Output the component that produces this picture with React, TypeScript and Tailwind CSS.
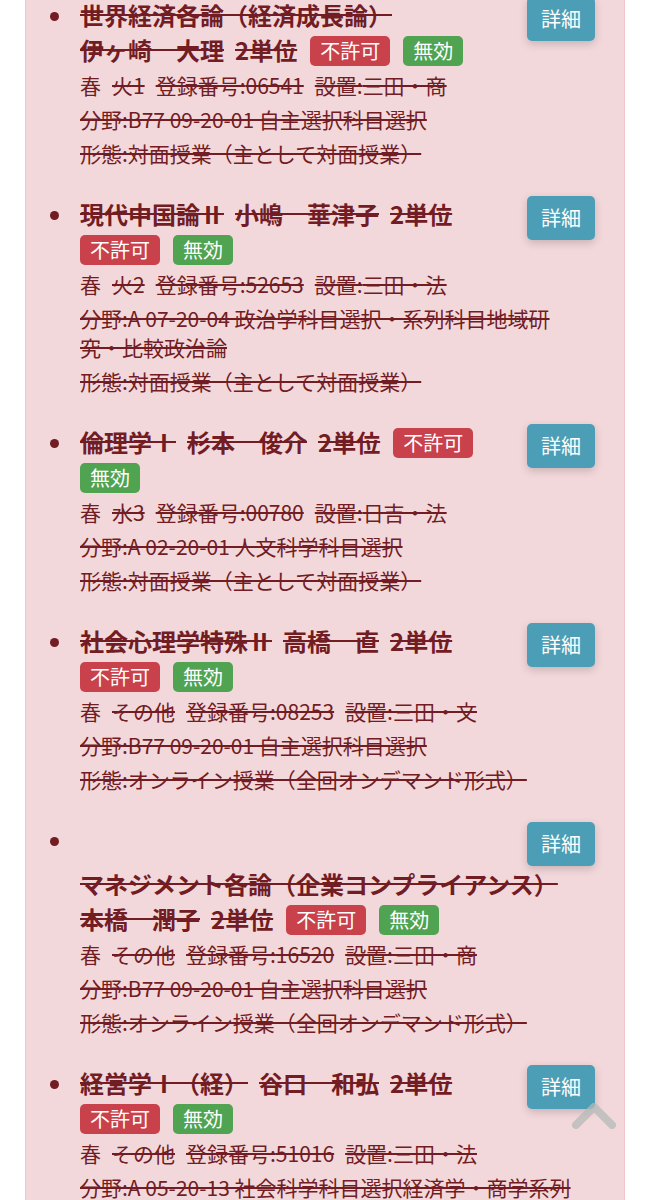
type Course = {
  name: string
  teacher: string
  time: string
  code: string
  place: string
  field: string
  form: string
}

const courses: Course[] = [
  {
    name: '世界経済各論（経済成長論）',
    teacher: '伊ヶ崎　大理',
    time: '火1',
    code: '06541',
    place: '三田・商',
    field: '分野:B77 09-20-01 自主選択科目選択',
    form: '形態:対面授業（主として対面授業）',
  },
  {
    name: '現代中国論Ⅱ',
    teacher: '小嶋　華津子',
    time: '火2',
    code: '52653',
    place: '三田・法',
    field: '分野:A 07-20-04 政治学科目選択・系列科目地域研究・比較政治論',
    form: '形態:対面授業（主として対面授業）',
  },
  {
    name: '倫理学Ⅰ',
    teacher: '杉本　俊介',
    time: '水3',
    code: '00780',
    place: '日吉・法',
    field: '分野:A 02-20-01 人文科学科目選択',
    form: '形態:対面授業（主として対面授業）',
  },
  {
    name: '社会心理学特殊Ⅱ',
    teacher: '高橋　直',
    time: 'その他',
    code: '08253',
    place: '三田・文',
    field: '分野:B77 09-20-01 自主選択科目選択',
    form: '形態:オンライン授業（全回オンデマンド形式）',
  },
  {
    name: 'マネジメント各論（企業コンプライアンス）',
    teacher: '本橋　潤子',
    time: 'その他',
    code: '16520',
    place: '三田・商',
    field: '分野:B77 09-20-01 自主選択科目選択',
    form: '形態:オンライン授業（全回オンデマンド形式）',
  },
  {
    name: '経営学Ⅰ（経）',
    teacher: '谷口　和弘',
    time: 'その他',
    code: '51016',
    place: '三田・法',
    field: '分野:A 05-20-13 社会科学科目選択経済学・商学系列科目群',
    form: '形態:オンライン授業（全回オンデマンド形式）',
  },
]

function CourseItem({ c }: { c: Course }) {
  return (
    <li className="flex mb-[23px]">
      <div className="w-[30px] h-[38px] shrink-0 flex items-center">
        <span className="block w-[9px] h-[9px] rounded-full bg-[#721c24]" />
      </div>
      <div className="flex-1 min-w-0">
        <button className="float-right ml-3 w-[68px] h-[44px] rounded-[5px] bg-[#4b9eb5] text-white text-[20px] shadow-[0_3px_8px_rgba(0,0,0,0.18)]">
          詳細
        </button>
        <div className="text-[24px] leading-[35px] font-bold mb-[4px]">
          <span className="inline-block line-through mr-[11px]">{c.name}</span>
          <span className="inline-block line-through mr-[11px]">{c.teacher}</span>
          <span className="inline-block line-through mr-[13px]">2単位</span>
          <span className="inline-block font-normal text-[20px] leading-[30px] px-[10px] rounded-[5px] bg-[#c9414b] text-white mr-[13px] align-[1px]">
            不許可
          </span>
          <span className="inline-block font-normal text-[20px] leading-[30px] px-[10px] rounded-[5px] bg-[#4fa351] text-white align-[1px]">
            無効
          </span>
        </div>
        <div className="text-[21px] leading-[29px] pr-[15px]">
          <div className="mb-[5px]">
            <span className="mr-[11px]">春</span>
            <span className="line-through mr-[11px]">{c.time}</span>
            <span className="line-through mr-[11px]">登録番号:{c.code}</span>
            <span className="line-through">設置:{c.place}</span>
          </div>
          <div className="line-through mb-[5px]">{c.field}</div>
          <div className="line-through mb-[5px]">{c.form}</div>
        </div>
      </div>
    </li>
  )
}

export default function App() {
  return (
    <div
      className="min-h-screen bg-white text-[#721c24]"
      style={{ fontFamily: '"Noto Sans CJK JP", "Noto Sans", sans-serif' }}
    >
      <div className="mx-[25px] border-x border-b border-[#efc6cb] bg-[#f3d8db] pl-[24px] pr-[29px] overflow-hidden">
        <ul className="-mt-[3px]">
          {courses.map((c) => (
            <CourseItem key={c.code} c={c} />
          ))}
        </ul>
      </div>
      <div className="fixed right-[33px] bottom-[70px] opacity-75">
        <svg width="46" height="32" viewBox="0 0 46 32">
          <polyline
            points="5,27 23,9 41,27"
            fill="none"
            stroke="#b4bab9"
            strokeWidth="8"
            strokeLinecap="round"
            strokeLinejoin="round"
          />
        </svg>
      </div>
    </div>
  )
}
